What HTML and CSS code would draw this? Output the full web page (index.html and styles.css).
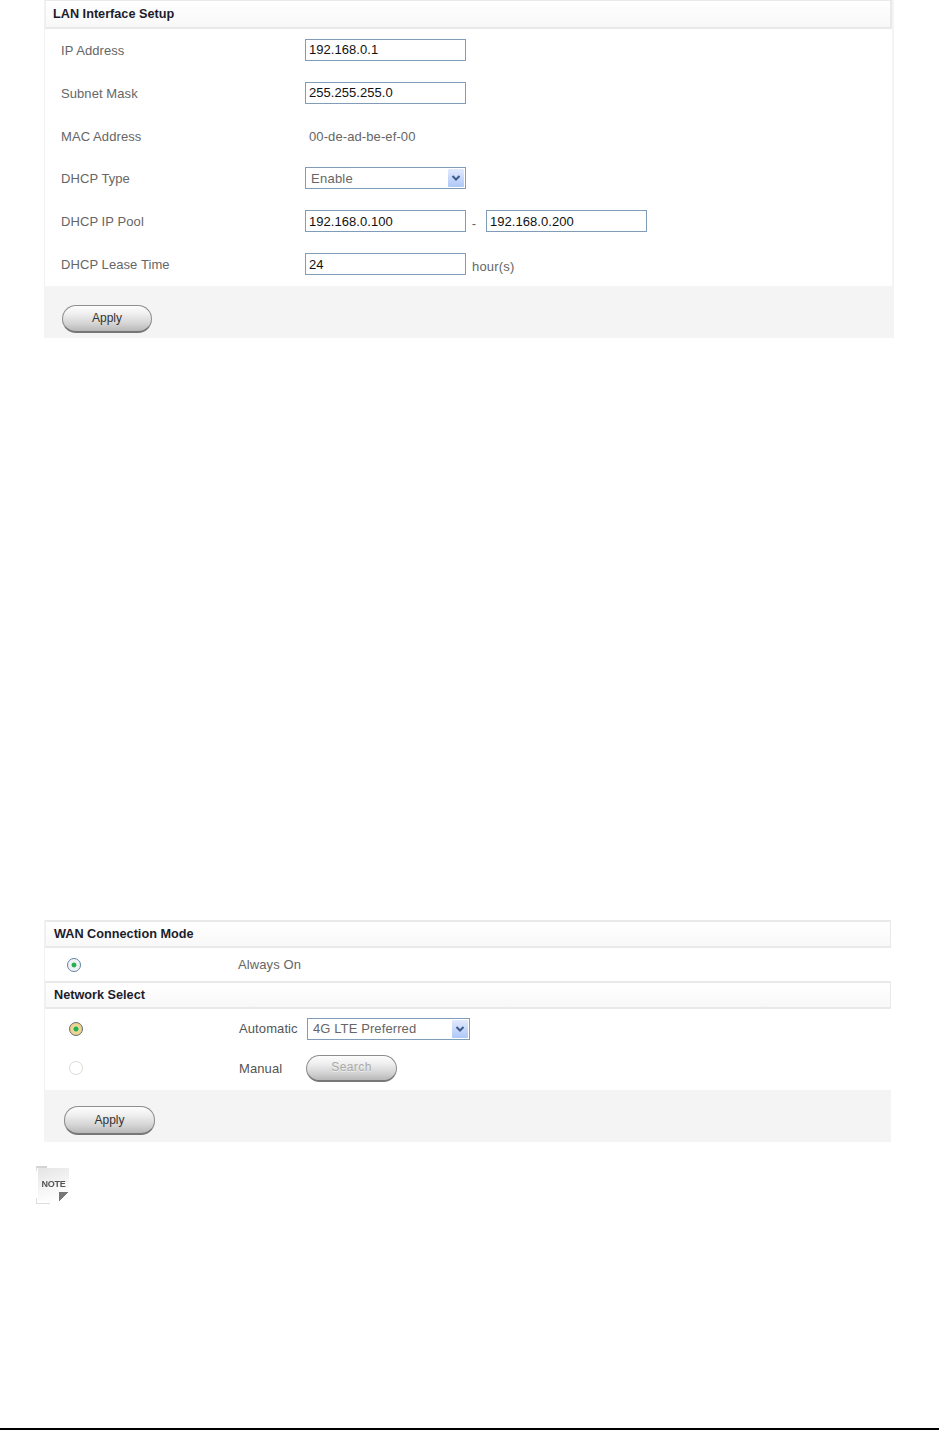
FILE: index.html
```html
<!DOCTYPE html>
<html lang="en">
<head>
<meta charset="utf-8">
<title>LAN and WAN setup</title>
<link rel="stylesheet" href="styles.css">
</head>
<body>
<main class="page">
  <section class="panel panel-lan">
    <h2 class="head">LAN Interface Setup</h2>
    <div class="rows">
      <div class="row"><span class="label">IP Address</span><input class="field" value="192.168.0.1"></div>
      <div class="row"><span class="label">Subnet Mask</span><input class="field" value="255.255.255.0"></div>
      <div class="row"><span class="label">MAC Address</span><span class="value">00-de-ad-be-ef-00</span></div>
      <div class="row"><span class="label">DHCP Type</span>
        <div class="select"><span>Enable</span><span class="arrow"><svg width="10" height="8" viewBox="0 0 10 8"><path d="M1.500 2 5 5.500 8.500 2" fill="none" stroke="#3d5a8a" stroke-width="2"/></svg></span></div>
      </div>
      <div class="row"><span class="label">DHCP IP Pool</span><input class="field" value="192.168.0.100"><span class="dash">-</span><input class="field" value="192.168.0.200"></div>
      <div class="row"><span class="label">DHCP Lease Time</span><input class="field" value="24"><span class="unit">hour(s)</span></div>
    </div>
    <div class="foot"><button class="btn" type="button">Apply</button></div>
  </section>

  <section class="panel panel-wan">
    <h2 class="head">WAN Connection Mode</h2>
    <div class="opt opt-always">
      <span class="radio-cell"><span class="radio radio-on"></span></span>
      <span class="opt-label">Always On</span>
    </div>
    <h2 class="head">Network Select</h2>
    <div class="opt opt-auto">
      <span class="radio-cell"><span class="radio radio-focus"></span></span>
      <span class="opt-text">Automatic</span>
      <div class="select select-wide"><span>4G LTE Preferred</span><span class="arrow"><svg width="10" height="8" viewBox="0 0 10 8"><path d="M1.500 2 5 5.500 8.500 2" fill="none" stroke="#3d5a8a" stroke-width="2"/></svg></span></div>
    </div>
    <div class="opt opt-manual">
      <span class="radio-cell"><span class="radio radio-off"></span></span>
      <span class="opt-text opt-text-manual">Manual</span>
      <button class="btn btn-off" type="button" disabled>Search</button>
    </div>
    <div class="foot foot-wan"><button class="btn btn-wide" type="button">Apply</button></div>
  </section>

  <div class="note" aria-label="Note">
    <span class="note-mark note-mark-top"></span>
    <span class="note-mark note-mark-bottom"></span>
    <span class="note-sheet"><span class="note-text">NOTE</span></span>
    <span class="note-fold"></span>
  </div>
</main>
<div class="rule"></div>
</body>
</html>
```
FILE: styles.css
```css
* { box-sizing: border-box; }
html, body { margin: 0; padding: 0; background: #fff; }
body {
  width: 939px;
  height: 1430px;
  display: flex;
  flex-direction: column;
  font-family: "Liberation Sans", Arial, sans-serif;
  font-size: 13px;
  color: #666;
  overflow: hidden;
}
.page { flex: 1; }

.panel {
  margin-left: 44px;
  border-left: 1px solid #f1f1f1;
  background: #fff;
}
.panel-lan { width: 850px; border-right: 2px solid #f4f4f4; }
.panel-wan { width: 847px; margin-top: 582px; }

.head {
  margin: 0;
  height: 28px;
  padding-left: 8px;
  font-size: 12.7px;
  line-height: 24px;
  font-weight: bold;
  color: #1c1c2c;
  background: linear-gradient(#fff, #f8f8f8);
  border: 1px solid #e9e9e9;
  border-left: 1px solid #efefef;
}
.panel-lan .head { border-width: 1px 2px 2px 1px; height: 29px; padding-left: 7px; line-height: 27px; }
.panel-wan .head { border-width: 2px 1px 2px 1px; }

.rows { height: 257px; display: flex; flex-direction: column; }
.row {
  display: flex;
  align-items: center;
  height: 43px;
  padding-left: 16px;
  letter-spacing: .08px;
}
.label { width: 244px; flex: none; color: #666; }
.value { padding-left: 4px; color: #666; letter-spacing: .1px; }

.field {
  width: 161px;
  height: 22px;
  margin-bottom: 1px;
  padding: 0 3px;
  border: 1px solid #7f9db9;
  font: 13px "Liberation Sans", Arial, sans-serif;
  letter-spacing: .05px;
  color: #111;
  background: #fff;
  outline: none;
}
.dash { width: 20px; padding: 4px 4px 0 0; text-align: center; }
.unit { margin-left: 6px; padding-top: 3px; letter-spacing: .2px; }

.select {
  width: 161px;
  height: 22px;
  margin-bottom: 1px;
  display: flex;
  align-items: center;
  justify-content: space-between;
  padding: 0 1px 0 5px;
  border: 1px solid #7f9db9;
  background: #fff;
  letter-spacing: .25px;
  color: #666;
}
.select-wide { width: 163px; margin: 0 0 0 8px; letter-spacing: .1px; }
.arrow {
  width: 16px;
  height: 18px;
  display: flex;
  align-items: center;
  justify-content: center;
  background: linear-gradient(#e1eafe, #aec8f7);
  border-radius: 1px;
}

.foot {
  height: 52px;
  background: #f4f4f4;
  padding: 19px 0 0 18px;
  margin-left: -1px;
}
.panel-lan .foot { margin-right: -2px; }
.foot-wan { padding: 16px 0 0 20px; }

.btn {
  display: block;
  width: 90px;
  height: 28px;
  padding: 0 0 1px;
  border: 1px solid #8e8e8e;
  border-bottom: 2px solid #777;
  border-radius: 14px;
  background: linear-gradient(#fdfdfd 0%, #f0f0f0 30%, #d4d4d4 70%, #b8b8b8 100%);
  font: 12px "Liberation Sans", Arial, sans-serif;
  color: #333;
}
.btn-wide { width: 91px; height: 29px; }
.btn-off {
  width: 91px;
  height: 27px;
  margin-left: 9px;
  color: #aaa;
  letter-spacing: .4px;
  text-shadow: 0 1px 0 #eee;
}

.opt { display: flex; align-items: center; letter-spacing: .1px; }
.opt-always { height: 33px; }
.opt-auto { height: 39px; }
.opt-manual { height: 42px; padding-bottom: 2px; }
.radio-cell { width: 194px; flex: none; padding-left: 24px; display: flex; }
.opt-always .radio-cell { padding-left: 22px; width: 193px; }
.opt-label { color: #666; }
.opt-text { width: 60px; color: #555; }
.opt-text-manual { width: 58px; }

.radio {
  display: block;
  width: 14px;
  height: 14px;
  border-radius: 50%;
  background: #fff;
}
.radio-on {
  border: 1px solid #5f7f9f;
  background: radial-gradient(circle, #22b14c 0 2px, #e8eef0 2.8px, #fff 100%);
}
.radio-focus {
  border: 1px solid #5f7080;
  background: radial-gradient(circle, #22b14c 0 2px, #ecd9a0 3px, #f2c05a 100%);
}
.radio-off { border: 1px solid #dcdcd4; }

.note {
  position: relative;
  width: 33px;
  height: 38px;
  margin: 24px 0 0 36px;
}
.note-mark { position: absolute; left: 0; width: 14px; }
.note-mark-top {
  top: 0;
  width: 11px;
  height: 5px;
  border-top: 2px solid #d4d4d4;
  border-left: 1px solid #ddd;
}
.note-mark-bottom {
  bottom: 0;
  height: 6px;
  border-bottom: 1px solid #ddd;
  border-left: 1px solid #ddd;
}
.note-sheet {
  position: absolute;
  left: 2px;
  top: 2px;
  width: 31px;
  height: 33px;
  padding-top: 11px;
  text-align: center;
  background: linear-gradient(160deg, #e4e4e4, #f6f6f6 55%, #fff 90%);
}
.note-text {
  display: block;
  font: bold 9px/10px "Liberation Sans", Arial, sans-serif;
  letter-spacing: -.3px;
  color: #555;
  filter: blur(.35px);
}
.note-fold {
  position: absolute;
  right: 0;
  bottom: 2px;
  width: 10px;
  height: 10px;
  background: linear-gradient(135deg, #777 50%, #fff 50%);
}

.rule { height: 2px; background: #000; flex: none; }
```
